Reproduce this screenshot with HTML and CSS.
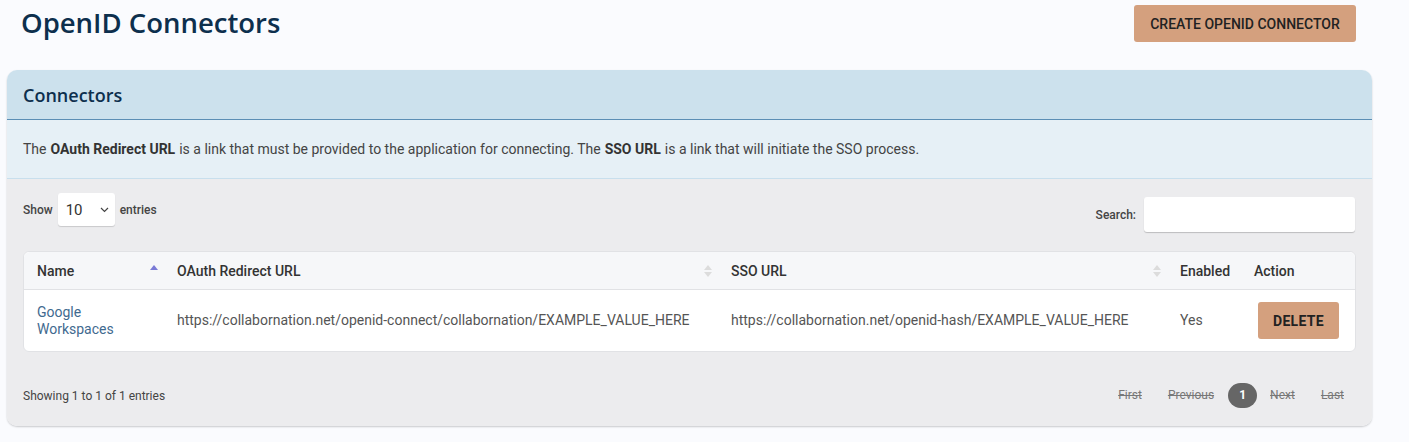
FILE: index.html
```html
<!DOCTYPE html>
<html lang="en">
<head>
    <meta charset="UTF-8">
    <meta name="viewport" content="width=device-width, initial-scale=1.0">
    <title>OpenID Connectors</title>
    <link rel="stylesheet" href="styles.css">
</head>
<body>
    <div class="page">
        <div class="topbar">
            <h1>OpenID Connectors</h1>
            <button class="btn btn-create">Create OpenID Connector</button>
        </div>
        <div class="card">
            <div class="card-header">
                <h2>Connectors</h2>
            </div>
            <div class="card-info">
                The <b>OAuth Redirect URL</b> is a link that must be provided to the application for connecting. The <b>SSO URL</b> is a link that will initiate the SSO process.
            </div>
            <div class="card-body">
                <div class="controls">
                    <label class="length">
                        Show
                        <span class="select">10
                            <svg width="9" height="6" viewBox="0 0 9 6"><path d="M1 1l3.5 3.5L8 1" fill="none" stroke="#444" stroke-width="1.2"/></svg>
                        </span>
                        entries
                    </label>
                    <label class="search">
                        Search:
                        <input type="text">
                    </label>
                </div>
                <table class="data-table">
                    <colgroup>
                        <col style="width: 140px">
                        <col style="width: 554px">
                        <col style="width: 449px">
                        <col style="width: 74px">
                        <col style="width: 114px">
                    </colgroup>
                    <thead>
                        <tr>
                            <th><div class="th-sort">Name <span class="sort asc"></span></div></th>
                            <th><div class="th-sort">OAuth Redirect URL <span class="sort"></span></div></th>
                            <th><div class="th-sort">SSO URL <span class="sort"></span></div></th>
                            <th>Enabled</th>
                            <th>Action</th>
                        </tr>
                    </thead>
                    <tbody>
                        <tr>
                            <td><a href="#" class="name-link">Google Workspaces</a></td>
                            <td>https://collabornation.net/openid-connect/collabornation/EXAMPLE_VALUE_HERE</td>
                            <td>https://collabornation.net/openid-hash/EXAMPLE_VALUE_HERE</td>
                            <td>Yes</td>
                            <td><button class="btn btn-delete">Delete</button></td>
                        </tr>
                    </tbody>
                </table>
                <div class="table-footer">
                    <div class="info">Showing 1 to 1 of 1 entries</div>
                    <div class="paging">
                        <span class="page-btn disabled">First</span>
                        <span class="page-btn disabled">Previous</span>
                        <span class="page-btn current">1</span>
                        <span class="page-btn disabled">Next</span>
                        <span class="page-btn disabled">Last</span>
                    </div>
                </div>
            </div>
        </div>
    </div>
</body>
</html>
```

FILE: styles.css
```css
body {
    margin: 0;
    background-color: #fafbfe;
    font-family: Roboto, "Liberation Sans", sans-serif;
    color: #444;
}
.page {
    padding: 0 37px 16px 7px;
}
.topbar {
    display: flex;
    justify-content: space-between;
    align-items: flex-start;
    height: 65px;
    padding: 5px 16px 0 14px;
}
h1 {
    margin: 0;
    font-family: "Open Sans", sans-serif;
    font-weight: 600;
    font-size: 27.5px;
    line-height: 36px;
    color: #0d2f4d;
}
.btn {
    border: none;
    border-radius: 3px;
    background-color: #d4a07e;
    color: #222;
    font-family: Roboto, sans-serif;
    text-transform: uppercase;
    cursor: pointer;
}
.btn-create {
    width: 222px;
    height: 37px;
    font-size: 14px;
    font-weight: 500;
}
.card {
    border-radius: 10px;
    box-shadow: 0 1px 2px rgba(0, 0, 0, 0.2);
    overflow: hidden;
}
.card-header {
    background-color: #cce1ed;
    border-bottom: 1px solid #5b8eb5;
    height: 49px;
    display: flex;
    align-items: center;
    padding: 0 16px;
}
h2 {
    margin: 0;
    font-family: "Open Sans", sans-serif;
    font-weight: 600;
    font-size: 18px;
    color: #0d2f4d;
}
.card-info {
    background-color: #e6f0f6;
    border-bottom: 1px solid #c8dfed;
    height: 58px;
    display: flex;
    align-items: center;
    padding: 0 16px;
    font-size: 14px;
    color: #444;
}
.card-info b {
    margin: 0 4px;
    color: #333;
}
.card-body {
    background-color: #ececee;
    padding: 14px 17px 18px 16px;
}
.controls {
    display: flex;
    justify-content: space-between;
    align-items: flex-start;
    font-size: 12px;
    font-weight: 500;
    color: #444;
}
.length {
    display: flex;
    align-items: center;
    gap: 5px;
}
.select {
    display: flex;
    align-items: center;
    justify-content: space-between;
    box-sizing: border-box;
    width: 57px;
    height: 33px;
    padding: 0 6px 0 8px;
    background: #fff;
    border-radius: 3px;
    box-shadow: 0 1px 1px rgba(0, 0, 0, 0.15);
    font-size: 15px;
    font-weight: 400;
    color: #333;
}
.search {
    display: flex;
    align-items: center;
    gap: 8px;
    margin-top: 4px;
}
.search input {
    width: 211px;
    height: 35px;
    box-sizing: border-box;
    border: none;
    border-radius: 3px;
    background: #fff;
    box-shadow: 0 1px 1px rgba(0, 0, 0, 0.2);
}
.data-table {
    width: 1331px;
    margin-top: 19px;
    border-collapse: separate;
    border-spacing: 0;
    table-layout: fixed;
    background: #fff;
    border: 1px solid #e1e2e5;
    border-radius: 6px;
    font-size: 14px;
}
.data-table th {
    height: 37px;
    padding: 0 6px 0 13px;
    background: #f6f7f9;
    border-bottom: 1px solid #e1e2e5;
    text-align: left;
    font-weight: 500;
    color: #333;
}
.data-table th:first-child {
    border-top-left-radius: 6px;
}
.data-table th:last-child {
    border-top-right-radius: 6px;
}
.th-sort {
    display: flex;
    justify-content: space-between;
    align-items: center;
}
.sort {
    display: flex;
    flex-direction: column;
    gap: 2px;
}
.sort::before,
.sort::after {
    content: "";
    border-left: 4px solid transparent;
    border-right: 4px solid transparent;
}
.sort::before {
    border-bottom: 5px solid #dcdcdc;
}
.sort::after {
    border-top: 5px solid #dcdcdc;
}
.sort.asc {
    margin-top: -7px;
}
.sort.asc::before {
    border-bottom-color: #7a7ad6;
}
.sort.asc::after {
    display: none;
}
.data-table td {
    height: 37px;
    padding: 12px 13px;
    color: #555;
    line-height: 17px;
}
.name-link {
    color: #3f6a8f;
    text-decoration: none;
}
.btn-delete {
    width: 81px;
    height: 37px;
    margin-left: 4px;
    font-size: 14px;
    font-weight: 700;
    letter-spacing: 0.3px;
}
.table-footer {
    display: flex;
    justify-content: space-between;
    align-items: center;
    margin-top: 31px;
    font-size: 12px;
    color: #444;
}
.paging {
    display: flex;
    align-items: center;
    margin-right: -2px;
}
.page-btn {
    padding: 0 13px;
    font-size: 12px;
    line-height: 25px;
}
.disabled {
    color: #777;
    text-decoration: line-through;
}
.current {
    width: 29px;
    height: 25px;
    padding: 0;
    margin-left: 1px;
    border-radius: 13px;
    background: #666;
    color: #fff;
    font-weight: 700;
    text-align: center;
}
```
